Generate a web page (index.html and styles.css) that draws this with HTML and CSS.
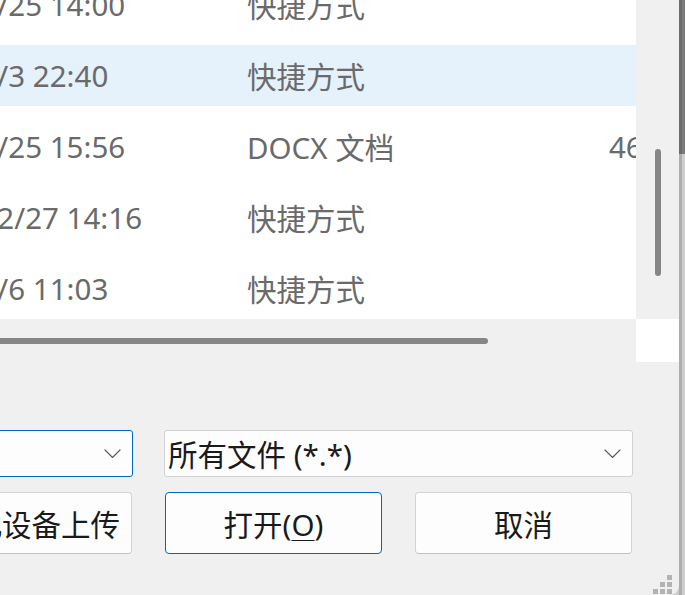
FILE: index.html
```html
<!DOCTYPE html>
<html lang="zh-CN">
<head>
<meta charset="utf-8">
<title>打开</title>
<link rel="stylesheet" href="styles.css">
</head>
<body>
<div class="window">
  <div class="main">
    <div class="view">
      <div class="list">
        <div class="row"><span class="date">2023/7/25 14:00</span><span class="type">快捷方式</span><span class="size"></span></div>
        <div class="row hover"><span class="date">2023/7/3 22:40</span><span class="type">快捷方式</span><span class="size"></span></div>
        <div class="row"><span class="date">2023/7/25 15:56</span><span class="type">DOCX 文档</span><span class="size">46 KB</span></div>
        <div class="row"><span class="date">2023/12/27 14:16</span><span class="type">快捷方式</span><span class="size"></span></div>
        <div class="row"><span class="date">2023/7/6 11:03</span><span class="type">快捷方式</span><span class="size"></span></div>
      </div>
      <div class="vtrack"><div class="vthumb"></div></div>
    </div>
    <div class="hrow">
      <div class="htrack"><div class="hthumb"></div></div>
      <div class="corner"></div>
    </div>
    <div class="controls">
      <div class="combo combo-name focused">
        <span class="combo-text"></span>
        <svg class="chev" width="17" height="9" viewBox="0 0 17 9"><polyline points="0.6,0.6 8.5,8.4 16.4,0.6" fill="none" stroke="#555" stroke-width="1.3"/></svg>
      </div>
      <div class="combo combo-filter">
        <span class="combo-text">所有文件 (*.*)</span>
        <svg class="chev" width="17" height="9" viewBox="0 0 17 9"><polyline points="0.6,0.6 8.5,8.4 16.4,0.6" fill="none" stroke="#555" stroke-width="1.3"/></svg>
      </div>
    </div>
    <div class="buttons">
      <button class="btn btn-upload">从此设备上传</button>
      <button class="btn btn-open">打开(<u>O</u>)</button>
      <button class="btn btn-cancel">取消</button>
    </div>
  </div>
  <div class="edge">
    <div class="edge-top"></div>
    <div class="edge-bottom"></div>
  </div>
  <svg class="grip" width="19" height="20" viewBox="0 0 19 20">
    <rect x="14" y="0" width="5" height="5" fill="#b3b3b3"/>
    <rect x="7" y="7" width="5" height="5" fill="#b3b3b3"/>
    <rect x="14" y="7" width="5" height="5" fill="#b3b3b3"/>
    <rect x="0" y="14" width="5" height="5" fill="#b3b3b3"/>
    <rect x="7" y="14" width="5" height="5" fill="#b3b3b3"/>
    <rect x="14" y="14" width="5" height="5" fill="#b3b3b3"/>
  </svg>
</div>
</body>
</html>
```
FILE: styles.css
```css
html, body {
  margin: 0;
  padding: 0;
}
body {
  width: 685px;
  height: 595px;
  overflow: hidden;
  background: #f0f0f0;
  font-family: "Noto Sans", "Noto Sans CJK SC", sans-serif;
  font-size: 29.5px;
}
.window {
  position: relative;
  display: flex;
  height: 595px;
  background: #cdcdcd;
}
.main {
  width: 679px;
  flex: 0 0 679px;
  display: flex;
  flex-direction: column;
  background: #f0f0f0;
  border-bottom-right-radius: 9px;
}
.view {
  display: flex;
  height: 319px;
}
.list {
  width: 636px;
  flex: 0 0 636px;
  background: #fff;
  overflow: hidden;
  display: flex;
  flex-direction: column;
  gap: 10px;
  color: #6a6a6a;
}
.row {
  flex: 0 0 61px;
  display: flex;
  align-items: center;
  white-space: nowrap;
}
.row:first-child {
  margin-top: -26px;
}
.row.hover {
  background: #e5f1fb;
}
.date {
  flex: 0 0 345px;
  margin-left: -98px;
}
.type {
  flex: 0 0 362px;
}
.size {
  flex: 0 0 auto;
}
.vtrack {
  width: 43px;
  flex: 0 0 43px;
  background: #f0f0f0;
  padding: 149px 0 0 19px;
  box-sizing: border-box;
}
.vthumb {
  width: 6px;
  height: 127px;
  border-radius: 3px;
  background: #868686;
}
.hrow {
  display: flex;
  height: 43px;
}
.htrack {
  width: 636px;
  flex: 0 0 636px;
  padding-top: 19px;
  box-sizing: border-box;
}
.hthumb {
  width: 488px;
  height: 6px;
  border-radius: 0 3px 3px 0;
  background: #868686;
}
.corner {
  width: 43px;
  height: 43px;
  background: #fff;
}
.controls {
  display: flex;
  gap: 31px;
  margin-top: 68px;
  height: 47px;
}
.combo {
  box-sizing: border-box;
  height: 47px;
  display: flex;
  align-items: center;
  justify-content: space-between;
  padding: 0 11px 0 3px;
  background: #fdfdfd;
  border: 1px solid #d1d1d1;
  border-radius: 3px;
  color: #1a1a1a;
}
.combo.focused {
  border-color: #0067c0;
}
.combo-name {
  margin-left: -67px;
  width: 200px;
  flex: 0 0 200px;
}
.combo-filter {
  width: 469px;
  flex: 0 0 469px;
}
.combo-text {
  white-space: nowrap;
}
.chev {
  display: block;
  flex: 0 0 auto;
}
.buttons {
  display: flex;
  gap: 33px;
  margin-top: 15px;
  height: 62px;
}
.btn {
  box-sizing: border-box;
  height: 62px;
  width: 217px;
  flex: 0 0 217px;
  padding: 0;
  font: inherit;
  color: #1a1a1a;
  background: #fdfdfd;
  border: 1px solid #d3d3d3;
  border-bottom-color: #c2c2c2;
  border-radius: 4px;
  white-space: nowrap;
  text-align: center;
}
.btn u {
  text-decoration-thickness: 1px;
  text-underline-offset: 4px;
}
.btn-upload {
  margin-left: -69px;
  width: 201px;
  flex: 0 0 201px;
}
.btn-open {
  border-color: #0067c0;
}
.edge {
  width: 6px;
  flex: 0 0 6px;
  display: flex;
  flex-direction: column;
}
.edge-top {
  height: 154px;
  background: linear-gradient(to right, #6b6b6b 0 3px, #7b7b7b 3px 6px);
}
.edge-bottom {
  flex: 1;
  background: linear-gradient(to right, #adadad 0 3px, #cdcdcd 3px 6px);
}
.grip {
  position: absolute;
  left: 653px;
  top: 575px;
}
```
